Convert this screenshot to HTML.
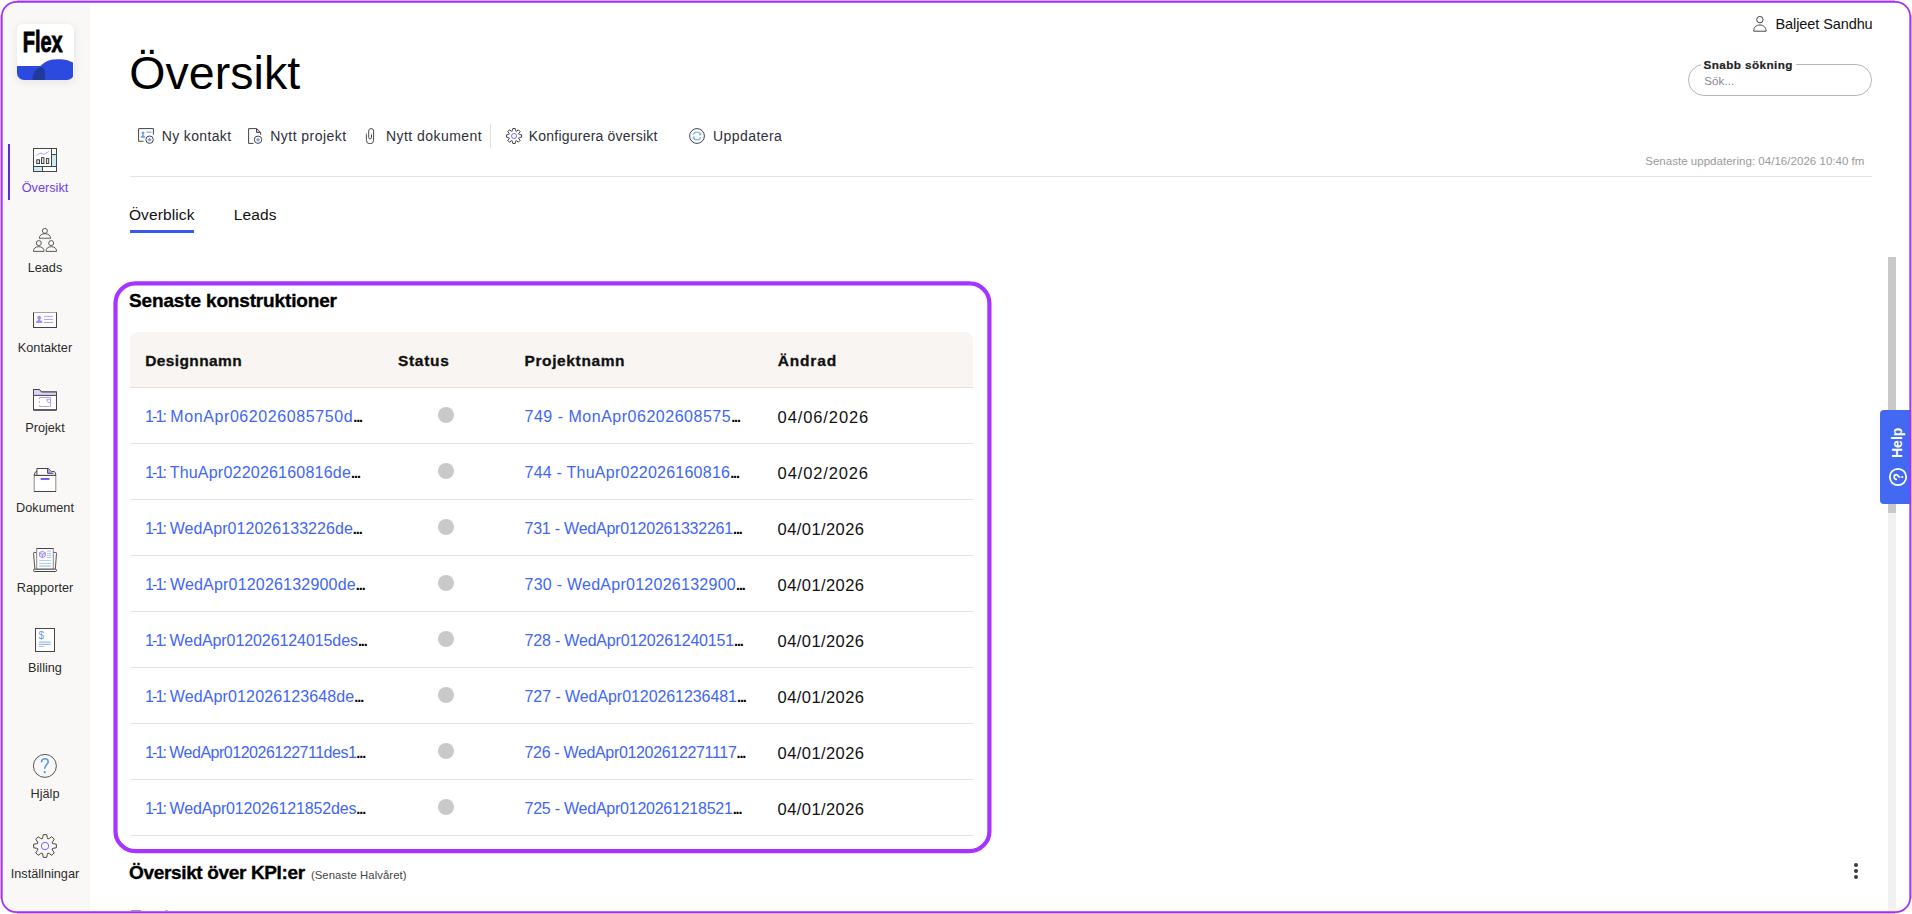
<!DOCTYPE html>
<html lang="sv">
<head>
<meta charset="utf-8">
<title>Översikt</title>
<style>
*{box-sizing:border-box;margin:0;padding:0}
html,body{width:1912px;height:914px;overflow:hidden;background:#fff}
body{font-family:"Liberation Sans",sans-serif;color:#111;position:relative}
.t{position:absolute;white-space:nowrap;line-height:20px}
.abs{position:absolute}
#side{position:absolute;left:0;top:0;width:90px;height:914px;background:#f9f8f6;border-radius:17px 0 0 17px}
.sl{position:absolute;left:0;width:90px;text-align:center;font-size:12.700px;line-height:16px;color:#2b2b2b;white-space:nowrap}
.si{position:absolute;left:33px;width:24px;height:24px}
.tb{font-size:14.5px;color:#2f2f3a}
.th{font-size:15px;font-weight:bold;color:#111;-webkit-text-stroke:0.300px #111}
#h1,#h2{-webkit-text-stroke:0.350px #000}
#slabel{-webkit-text-stroke:0.200px #222}
.lk{font-size:15.5px;color:#4166f5}
.lk i{font-style:normal;letter-spacing:-1.800px}
.lk b{font-weight:bold;color:#000;letter-spacing:-1.100px;font-size:14.500px}
.dt{font-size:15.5px;color:#111}
.rl{position:absolute;left:130px;width:843px;height:1px;background:#e6e1dd}
.dot{position:absolute;left:438px;width:16px;height:16px;border-radius:50%;background:#c9c9c9}
</style>
</head>
<body>
<!-- SIDEBAR -->
<div id="side">
  <div class="abs" id="logo" style="left:17.200px;top:24px;width:56.500px;height:56px;border-radius:6px 6px 7px 7px;background:#fff;box-shadow:0 2px 10px rgba(0,0,0,.09);overflow:hidden">
    <svg width="56" height="56" viewBox="0 0 56 56">
      <path d="M0 42H23.500C26 39.500 30 36.600 34 35.800S46 34.800 49.500 36.100S54.500 37.800 56 38.500V56H0Z" fill="#2d4ae0"/>
      <path d="M15.500 56A12.600 12.600 0 0 1 24 42.800Q27.400 44.300 28 47.200V56Z" fill="#1f3a98"/>
      <text x="5.700" y="27.500" font-family="Liberation Sans, sans-serif" font-weight="bold" font-size="29.500" textLength="40" lengthAdjust="spacingAndGlyphs" fill="#000" stroke="#000" stroke-width="0.900">Flex</text>
    </svg>
  </div>
  <div class="abs" style="left:8px;top:144px;width:2px;height:56px;background:#5a2be0"></div>

  <!-- Översikt icon -->
  <svg class="si" style="top:148px" viewBox="0 0 24 24" fill="none" stroke="#444" stroke-width="1">
    <rect x="0.5" y="0.5" width="23" height="23" fill="#fff" stroke="none"/>
    <rect x="18.5" y="6.5" width="5" height="12" fill="#cdeaf8" stroke="none"/>
    <rect x="0.5" y="18.5" width="9" height="5" fill="#cdeaf8" stroke="none"/>
    <rect x="0.5" y="0.5" width="23" height="23"/>
    <path d="M18.5 0.5V18.5M0.5 18.5H23.5M18.5 6.5H23.5M9.5 18.5V23.5"/>
    <rect x="3.7" y="11.8" width="2.8" height="3.7" fill="#e8e8e8"/>
    <rect x="8.5" y="9.6" width="2.4" height="5.9" fill="#e8e8e8"/>
    <rect x="13.4" y="10.5" width="2.3" height="5" fill="#e8e8e8"/>
    <path d="M3.3 7.6C5 6.4 6.6 5.2 8 5.2S9.6 6.4 10.6 6.2S14 4.8 15.7 3.5" stroke="#a78bfa" stroke-width="0.9"/>
  </svg>
  <!-- Leads icon -->
  <svg class="si" style="top:228px" viewBox="0 0 24 24" fill="none" stroke="#4a4a4a" stroke-width="0.9">
    <circle cx="11.9" cy="2.9" r="2.5"/>
    <path d="M6.3 10.4C6.3 7.2 8.6 5.7 11.9 5.7S17.5 7.2 17.5 10.4Z"/>
    <path d="M6.3 10.4H17.5" stroke="#888" stroke-width="1.3"/>
    <circle cx="5.8" cy="15.1" r="2.5"/>
    <path d="M0.4 23.4C0.4 20.200 2.600 18.700 5.800 18.700S11 20.200 11 23.400Z"/>
    <circle cx="18.2" cy="15.1" r="2.5"/>
    <path d="M13 23.4C13 20.200 15.100 18.700 18.300 18.700S23.600 20.200 23.600 23.400Z"/>
  </svg>
  <!-- Kontakter icon -->
  <svg class="si" style="top:308px" viewBox="0 0 24 24" fill="none" stroke="#444" stroke-width="1">
    <rect x="0.5" y="4.5" width="23" height="15" fill="#fff"/>
    <path d="M0.5 4.5H23.5" stroke="#a5a5a5"/>
    <circle cx="6.2" cy="9.6" r="1.9" fill="#a78bfa" stroke="none"/>
    <path d="M5.3 11h1.8v1.2c1.6 0.3 2.2 1 2.2 2.7H3.1c0-1.700 0.600-2.400 2.200-2.700Z" fill="#a78bfa" stroke="none"/>
    <path d="M11.100 8.300H20M11.100 11.400H20M11.100 14.500H20" stroke="#b39bfa"/>
  </svg>
  <!-- Projekt icon -->
  <svg class="si" style="top:388px" viewBox="0 0 24 24" fill="none" stroke="#444" stroke-width="1">
    <path d="M0.500 1.500H6.500L8.300 3.900H23.500V22H0.500Z" fill="#fff"/>
    <path d="M0.500 1.500H6.500L8.300 3.900H23.500V7.400H0.500Z" fill="#ddd3fb"/>
    <path d="M8.300 3.900H23.500" stroke="#777"/>
    <path d="M0.500 22H23.500" stroke-width="1.400"/>
    <path d="M6.500 11V9.500H17.600V18.500H6.500V17.200M6.500 12.900V14.800" stroke="#b6a1f7"/>
    <path d="M13.700 11.300H17.600M13.700 11.300A3.900 3.900 0 0 0 17.600 15" stroke="#b6a1f7"/>
  </svg>
  <!-- Dokument icon -->
  <svg class="si" style="top:468px" viewBox="0 0 24 24" fill="none" stroke="#444" stroke-width="1">
    <path d="M3.900 7.400V0.500H15.300L18.400 3.500H21.300Q22.700 4.600 22.900 7.400" fill="#fff"/>
    <path d="M14.600 0.700V5.300H20.200L15.300 0.700Z" fill="#b9a5f8" stroke="none"/>
    <path d="M14.600 0.500V5.300H20.500" />
    <path d="M1 7.400Q1.400 4.200 3.900 3"/>
    <path d="M1.2 7.400H22.800V23.500H1.200Z" fill="#fff" stroke="#8a8a8a"/>
    <path d="M1 7.400H23M1 23.500H23" stroke="#444"/>
    <path d="M8.300 11H15.800" stroke="#7c5cf0" stroke-width="1.800" stroke-linecap="round"/>
  </svg>
  <!-- Rapporter icon -->
  <svg class="si" style="top:548px" viewBox="0 0 24 24" fill="none" stroke="#444" stroke-width="1">
    <path d="M3.700 4.500H1.200Q0.400 4.500 0.500 5.300L1.900 21.200M20.300 4.500H22.800Q23.600 4.500 23.500 5.300L22.300 21.200" stroke="#555"/>
    <rect x="3.700" y="0.500" width="16.600" height="20.700" fill="#fff" stroke="#888"/>
    <path d="M3.700 0.500H20.300" stroke="#444"/>
    <rect x="0.600" y="21.200" width="22.800" height="2.300" rx="0.800" fill="#fff"/>
    <path d="M9.400 3.100L12.300 4.700V8.200L9.400 9.800L6.500 8.200V4.700ZM6.500 4.700L9.400 6.300L12.300 4.700M9.400 6.300V9.800" stroke="#a78bfa" fill="#e5dcfd"/>
    <path d="M14 3.100H18" stroke="#c7dbf6" stroke-width="1.800"/>
    <path d="M14 5.400H18M14 7.400H18M14 9.500H18M6.200 12.400H18M6.200 15.400H18" stroke="#a9c8f0"/>
    <path d="M6.200 18H18" stroke="#c7dbf6" stroke-width="1.900"/>
  </svg>
  <!-- Billing icon -->
  <svg class="si" style="top:628px" viewBox="0 0 24 24" fill="none" stroke="#444" stroke-width="1">
    <rect x="2.500" y="0.500" width="19" height="23" fill="#fff"/>
    <text x="8.400" y="10.700" text-anchor="middle" font-family="Liberation Sans, sans-serif" font-size="10" fill="#6ea0ea" stroke="none">$</text>
    <path d="M6 14.300H17.800" stroke="#b5cff3" stroke-width="2"/>
    <path d="M6 16.500H17.800M6 18.400H10.800" stroke="#9dbff0"/>
  </svg>
  <!-- Hjälp icon -->
  <svg class="si" style="top:754px" viewBox="0 0 24 24" fill="none" stroke="#444" stroke-width="0.900">
    <circle cx="11.900" cy="11.900" r="11.500"/>
    <path d="M8.500 7.600C8.700 5.700 10.100 4.800 11.900 4.800C13.900 4.800 15.200 6 15.200 7.700C15.200 10.200 12 11 11.700 14.300" stroke="#5a9cec" stroke-width="1.600" stroke-linecap="round"/>
    <circle cx="11.700" cy="18.200" r="1.150" fill="#5a9cec" stroke="none"/>
  </svg>
  <!-- Inställningar icon -->
  <svg class="si" style="top:834px" viewBox="0 0 24 24" fill="none" stroke="#444" stroke-width="1" stroke-linejoin="round">
    <path d="M9.70 3.61 L10.25 0.63 L13.75 0.63 L14.30 3.61 Q14.53 5.90 16.31 4.44 L18.80 2.73 L21.27 5.20 L19.56 7.69 Q18.10 9.47 20.39 9.70 L23.37 10.25 L23.37 13.75 L20.39 14.30 Q18.10 14.53 19.56 16.31 L21.27 18.80 L18.80 21.27 L16.31 19.56 Q14.53 18.10 14.30 20.39 L13.75 23.37 L10.25 23.37 L9.70 20.39 Q9.47 18.10 7.69 19.56 L5.20 21.27 L2.73 18.80 L4.44 16.31 Q5.90 14.53 3.61 14.30 L0.63 13.750 L0.63 10.25 L3.61 9.70 Q5.90 9.47 4.44 7.69 L2.73 5.20 L5.20 2.73 L7.69 4.44 Q9.47 5.90 9.70 3.61 Z"/>
    <circle cx="12" cy="12" r="3.700" stroke="#8b5cf6"/>
  </svg>
  <div class="sl" style="top:180px;color:#6d42e8">Översikt</div>
  <div class="sl" style="top:260px">Leads</div>
  <div class="sl" style="top:340px">Kontakter</div>
  <div class="sl" style="top:420px">Projekt</div>
  <div class="sl" style="top:500px">Dokument</div>
  <div class="sl" style="top:580px">Rapporter</div>
  <div class="sl" style="top:660px">Billing</div>
  <div class="sl" style="top:786px">Hjälp</div>
  <div class="sl" style="top:866px">Inställningar</div>
</div>

<!-- HEADER -->
<div class="t" id="title" style="top:42.500px;line-height:60px;color:#000;font-size:46.5px;letter-spacing:0.080px;left:129.200px">Översikt</div>

<div class="t" id="user" style="top:14px;color:#111;font-size:14.5px;letter-spacing:-0.090px;left:1775.5px">Baljeet Sandhu</div>

<div class="abs" style="left:1688px;top:64px;width:184px;height:32px;border:1px solid #b5b5b5;border-radius:16px"></div>
<div class="t" id="slabel" style="top:55.600px;font-weight:bold;color:#222;background:#fff;padding:0 3px;line-height:18px;font-size:11.700px;letter-spacing:0.420px;left:1700.600px">Snabb sökning</div>
<div class="t" id="sph" style="top:71.500px;color:#858590;line-height:18px;font-size:11.5px;letter-spacing:0.143px;left:1704.2px">Sök...</div>

<!-- TOOLBAR -->
<!-- toolbar icons -->
<svg class="abs" style="left:138px;top:128px" width="16" height="16" viewBox="0 0 16 16" fill="none" stroke="#444" stroke-width="1">
  <path d="M5.500 13.300H0.600V0.600H15.400V6.600"/>
  <circle cx="5" cy="5" r="1.500" fill="#6ea0ea" stroke="none"/>
  <path d="M2.700 9.700c0-1.500 0.700-2.100 1.600-2.300V6.300h1.400v1.100c0.900 0.200 1.600 0.800 1.600 2.300Z" fill="#6ea0ea" stroke="none"/>
  <path d="M8.400 4.200H13.500" stroke="#7fb0f2" stroke-width="1.300"/>
  <circle cx="11.600" cy="11.700" r="3.700" fill="#fff"/>
  <path d="M11.600 9.900V13.500M9.800 11.700H13.400" stroke="#6ea0ea" stroke-width="1.400"/>
</svg>
<svg class="abs" style="left:246.600px;top:128px" width="16" height="16" viewBox="0 0 16 16" fill="none" stroke="#444" stroke-width="1">
  <path d="M9.800 1L13 4.200H9.800Z" fill="#d6cbfa" stroke="none"/>
  <path d="M6.500 15.400H1.600V0.600H9.500L13.600 4.400V6.800"/>
  <path d="M9.500 0.600V4.500H13.400"/>
  <circle cx="11" cy="11.700" r="3.700" fill="#fff"/>
  <path d="M11 9.900V13.500M9.200 11.700H12.800" stroke="#6ea0ea" stroke-width="1.400"/>
</svg>
<svg class="abs" style="left:362px;top:128px" width="16" height="16" viewBox="0 0 16 16" fill="none" stroke="#4a4a4a" stroke-width="1">
  <path d="M4.400 6.300V12.200a3.600 3.600 0 0 0 7.200 0V3a2.450 2.450 0 0 0-4.900 0V9.400a1.400 1.400 0 0 0 2.800 0V6.800"/>
  <path d="M4.400 5V6.400M9.500 5.400V6.800" stroke="#a98bff"/>
</svg>
<svg class="abs" style="left:506px;top:128px" width="16" height="16" viewBox="0 0 16 16" fill="none" stroke="#444" stroke-width="1" stroke-linejoin="round">
  <path d="M6.45 2.51 L6.80 0.50 L9.20 0.50 L9.55 2.51 Q9.65 4.03 10.78 3.03 L12.46 1.84 L14.16 3.54 L12.97 5.22 Q11.97 6.35 13.49 6.45 L15.50 6.80 L15.50 9.20 L13.49 9.55 Q11.97 9.65 12.97 10.78 L14.16 12.46 L12.46 14.16 L10.78 12.97 Q9.65 11.97 9.55 13.49 L9.20 15.50 L6.80 15.50 L6.45 13.49 Q6.35 11.97 5.22 12.97 L3.54 14.16 L1.84 12.46 L3.03 10.78 Q4.03 9.65 2.51 9.55 L0.50 9.20 L0.50 6.80 L2.51 6.45 Q4.03 6.35 3.03 5.22 L1.84 3.54 L3.54 1.84 L5.22 3.03 Q6.35 4.03 6.45 2.51 Z"/>
  <circle cx="8" cy="8" r="2.500" stroke="#8a63f0"/>
</svg>
<svg class="abs" style="left:689px;top:128px" width="16" height="16" viewBox="0 0 16 16" fill="none" stroke="#444" stroke-width="1">
  <circle cx="8" cy="8" r="7.400"/>
  <path d="M4.300 6.800A3.900 3.900 0 0 1 11.600 6.600M11.700 9.200A3.900 3.900 0 0 1 4.400 9.400" stroke="#7ab0f5" stroke-width="1.200"/>
  <path d="M11.900 4.800V6.900H9.900M4.100 11.200V9.100H6.100" stroke="#7ab0f5" stroke-width="1"/>
</svg>
<!-- user icon -->
<svg class="abs" style="left:1752px;top:16px" width="16" height="16" viewBox="0 0 16 16" fill="none" stroke="#444" stroke-width="1">
  <circle cx="7.900" cy="3.650" r="3.200"/>
  <path d="M1.700 15.200C1.700 11.200 4.300 9 7.900 9S14.100 11.200 14.100 15.200Z"/>
</svg>
<div class="t tb" id="tb1" style="top:126px;font-size:14px;letter-spacing:0.350px;left:161.8px">Ny kontakt</div>
<div class="t tb" id="tb2" style="top:126px;font-size:14px;letter-spacing:0.452px;left:270.3px">Nytt projekt</div>
<div class="t tb" id="tb3" style="top:126px;font-size:14px;letter-spacing:0.444px;left:386.0px">Nytt dokument</div>
<div class="abs" style="left:490px;top:124px;width:1px;height:24px;background:#e2e2e2"></div>
<div class="t tb" id="tb4" style="top:126px;font-size:14px;letter-spacing:0.211px;left:528.8px">Konfigurera översikt</div>
<div class="t tb" id="tb5" style="top:126px;font-size:14px;letter-spacing:0.428px;left:713.0px">Uppdatera</div>

<div class="t" id="upd" style="top:151px;color:#9a9a9a;font-size:11.5px;letter-spacing:0.031px;left:1645.2px">Senaste uppdatering: 04/16/2026 10:40 fm</div>
<div class="abs" style="left:130px;top:176px;width:1742px;height:1px;background:#e4e4e4"></div>

<!-- TABS -->
<div class="t" id="tab1" style="top:204.5px;color:#111;font-size:15.5px;letter-spacing:0.122px;left:128.9px">Överblick</div>
<div class="t" id="tab2" style="top:204.5px;color:#111;font-size:15.5px;letter-spacing:0.134px;left:233.7px">Leads</div>
<div class="abs" style="left:130px;top:230px;width:64px;height:3px;background:#3959f2"></div>

<!-- CARD -->
<div class="t" id="h1" style="top:291px;font-weight:bold;color:#000;font-size:19px;letter-spacing:-0.158px;left:129.1px">Senaste konstruktioner</div>
<div class="abs" style="left:130px;top:332px;width:843px;height:55px;background:#f9f5f2;border-radius:8px 8px 0 0"></div>
<div class="t th" id="th1" style="top:350.5px;font-size:15.5px;letter-spacing:0.389px;left:145.2px">Designnamn</div>
<div class="t th" id="th2" style="top:350.5px;font-size:15.5px;letter-spacing:0.722px;left:397.9px">Status</div>
<div class="t th" id="th3" style="top:350.5px;font-size:15.5px;letter-spacing:0.619px;left:524.5px">Projektnamn</div>
<div class="t th" id="th4" style="top:350.5px;font-size:15.5px;letter-spacing:0.843px;left:777.7px">Ändrad</div>
<div class="rl" style="top:387px"></div>

<!-- ROWS -->
<div id="rows">
<div class="t lk" id="d0" style="top:406.5px;font-size:16px;letter-spacing:0.592px;left:144.9px"><i>1-1:</i> MonApr062026085750d<b>...</b></div>
<div class="dot" style="top:407px"></div>
<div class="t lk" id="p0" style="top:406.5px;font-size:16px;letter-spacing:0.515px;left:524.5px">749 - MonApr06202608575<b>...</b></div>
<div class="t dt" id="t0" style="top:406.5px;font-size:16.5px;letter-spacing:0.892px;left:777.6px">04/06/2026</div>
<div class="rl" style="top:443px"></div>
<div class="t lk" id="d1" style="top:462.5px;font-size:16px;letter-spacing:0.218px;left:144.9px"><i>1-1:</i> ThuApr022026160816de<b>...</b></div>
<div class="dot" style="top:463px"></div>
<div class="t lk" id="p1" style="top:462.5px;font-size:16px;letter-spacing:0.241px;left:524.5px">744 - ThuApr022026160816<b>...</b></div>
<div class="t dt" id="t1" style="top:462.5px;font-size:16.5px;letter-spacing:0.872px;left:777.6px">04/02/2026</div>
<div class="rl" style="top:499px"></div>
<div class="t lk" id="d2" style="top:518.5px;font-size:16px;letter-spacing:0.050px;left:144.9px"><i>1-1:</i> WedApr012026133226de<b>...</b></div>
<div class="dot" style="top:519px"></div>
<div class="t lk" id="p2" style="top:518.5px;font-size:16px;letter-spacing:-0.226px;left:524.5px">731 - WedApr0120261332261<b>...</b></div>
<div class="t dt" id="t2" style="top:518.5px;font-size:16.5px;letter-spacing:0.422px;left:777.6px">04/01/2026</div>
<div class="rl" style="top:555px"></div>
<div class="t lk" id="d3" style="top:574.5px;font-size:16px;letter-spacing:0.193px;left:144.9px"><i>1-1:</i> WedApr012026132900de<b>...</b></div>
<div class="dot" style="top:575px"></div>
<div class="t lk" id="p3" style="top:574.5px;font-size:16px;letter-spacing:0.261px;left:524.5px">730 - WedApr012026132900<b>...</b></div>
<div class="t dt" id="t3" style="top:574.5px;font-size:16.5px;letter-spacing:0.422px;left:777.6px">04/01/2026</div>
<div class="rl" style="top:611px"></div>
<div class="t lk" id="d4" style="top:630.5px;font-size:16px;letter-spacing:-0.088px;left:144.9px"><i>1-1:</i> WedApr012026124015des<b>...</b></div>
<div class="dot" style="top:631px"></div>
<div class="t lk" id="p4" style="top:630.5px;font-size:16px;letter-spacing:-0.186px;left:524.5px">728 - WedApr0120261240151<b>...</b></div>
<div class="t dt" id="t4" style="top:630.5px;font-size:16.5px;letter-spacing:0.422px;left:777.6px">04/01/2026</div>
<div class="rl" style="top:667px"></div>
<div class="t lk" id="d5" style="top:686.5px;font-size:16px;letter-spacing:0.122px;left:144.9px"><i>1-1:</i> WedApr012026123648de<b>...</b></div>
<div class="dot" style="top:687px"></div>
<div class="t lk" id="p5" style="top:686.5px;font-size:16px;letter-spacing:-0.066px;left:524.5px">727 - WedApr0120261236481<b>...</b></div>
<div class="t dt" id="t5" style="top:686.5px;font-size:16.5px;letter-spacing:0.422px;left:777.6px">04/01/2026</div>
<div class="rl" style="top:723px"></div>
<div class="t lk" id="d6" style="top:742.5px;font-size:16px;letter-spacing:-0.485px;left:144.9px"><i>1-1:</i> WedApr012026122711des1<b>...</b></div>
<div class="dot" style="top:743px"></div>
<div class="t lk" id="p6" style="top:742.5px;font-size:16px;letter-spacing:-0.333px;left:524.5px">726 - WedApr01202612271117<b>...</b></div>
<div class="t dt" id="t6" style="top:742.5px;font-size:16.5px;letter-spacing:0.422px;left:777.6px">04/01/2026</div>
<div class="rl" style="top:779px"></div>
<div class="t lk" id="d7" style="top:798.5px;font-size:16px;letter-spacing:-0.157px;left:144.9px"><i>1-1:</i> WedApr012026121852des<b>...</b></div>
<div class="dot" style="top:799px"></div>
<div class="t lk" id="p7" style="top:798.5px;font-size:16px;letter-spacing:-0.238px;left:524.5px">725 - WedApr0120261218521<b>...</b></div>
<div class="t dt" id="t7" style="top:798.5px;font-size:16.5px;letter-spacing:0.422px;left:777.6px">04/01/2026</div>
<div class="rl" style="top:835px"></div>
</div>

<svg class="abs" id="hl" style="left:100px;top:270px" width="910" height="600" viewBox="100 270 910 600" fill="none">
  <rect x="115.500" y="283.400" width="873.900" height="567.800" rx="20" stroke="#a633ff" stroke-width="4.200"/>
</svg>

<div class="t" id="h2" style="top:862.5px;font-weight:bold;color:#000;font-size:19px;letter-spacing:-0.351px;left:129.1px">Översikt över KPI:er</div>
<div class="t" id="h2s" style="top:864.5px;color:#444;font-size:11.3px;letter-spacing:0.086px;left:310.9px">(Senaste Halvåret)</div>

<div class="abs" style="left:130.500px;top:910px;width:10.500px;height:1.200px;background:rgba(40,20,60,.45)"></div>
<div class="abs" style="left:165px;top:910.300px;width:3px;height:1px;background:rgba(40,20,60,.3)"></div>
<!-- kebab -->
<div class="abs" style="left:1854px;top:863px;width:4px;height:4px;border-radius:50%;background:#3c3c3c;box-shadow:0 6px 0 #3c3c3c,0 12px 0 #3c3c3c"></div>

<!-- scrollbar -->
<div class="abs" style="left:1888px;top:257px;width:8px;height:654px;background:#f1f1f1"></div>
<div class="abs" style="left:1888px;top:257px;width:8px;height:255.5px;background:#c9c9c9"></div>

<!-- help tab -->
<div class="abs" id="help" style="left:1880px;top:410px;width:31px;height:94px;background:#4368f2;border-radius:4px 0 0 4px">
  <div style="position:absolute;left:17px;top:48px;width:0;height:0">
    <div id="helptxt" style="position:absolute;left:0.300px;top:-10px;width:40px;height:20px;line-height:20px;transform-origin:0 50%;transform:rotate(-90deg);font-size:14px;font-weight:bold;color:#fff;white-space:nowrap">Help</div>
  </div>
  <svg style="position:absolute;left:7.600px;top:56.600px" width="20" height="20" viewBox="0 0 20 20" fill="none" stroke="#fff" stroke-width="1.800">
    <circle cx="10" cy="10" r="8.200"/>
    <g transform="rotate(-90 10 10)"><path d="M7.600 8.300C7.700 6.900 8.700 6.200 10 6.200C11.400 6.200 12.400 7 12.400 8.200C12.400 9.900 10.100 9.900 10 11.800" stroke-width="1.700" stroke-linecap="round"/><circle cx="10" cy="14.300" r="1.100" fill="#fff" stroke="none"/></g>
  </svg>
</div>

<svg class="abs" id="frame" style="left:0;top:0" width="1912" height="914" viewBox="0 0 1912 914" fill="none">
  <path d="M17 0.500H1895M17 913.500H1895M0.500 15V899M1911.500 15V899" stroke="#d9a9ff" stroke-width="1"/>
  <path d="M90 3.400H16.900A13.500 13.500 0 0 0 3.400 16.900V897.100A13.500 13.500 0 0 0 16.900 910.600H90" stroke="#fff" stroke-opacity="0.800" stroke-width="1"/>
  <rect x="1.800" y="1.800" width="1908.400" height="910.400" rx="14.800" stroke="#a42fff" stroke-width="1.700"/>
</svg>
</body>
</html>
